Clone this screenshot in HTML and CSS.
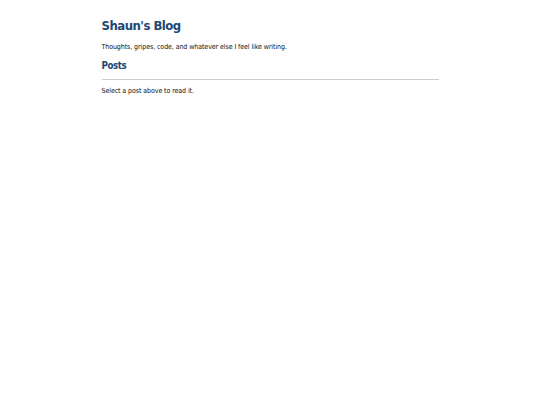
FILE: index.html
```html
<!DOCTYPE html>
<html>
<head>
<meta charset="utf-8">
<title>Shaun's Blog</title>
<link rel="stylesheet" href="styles.css">
</head>
<body>
<div class="page">
  <header class="site-header">
    <h1 class="site-title">Shaun's Blog</h1>
    <p class="tagline">Thoughts, gripes, code, and whatever else I feel like writing.</p>
  </header>
  <section class="posts">
    <h2 class="section-title">Posts</h2>
    <hr class="rule">
    <p class="empty">Select a post above to read it.</p>
  </section>
</div>
</body>
</html>
```
FILE: styles.css
```css
html, body {
  margin: 0;
  padding: 0;
  background: #ffffff;
}
body {
  font-family: "DejaVu Sans Condensed", "DejaVu Sans", sans-serif;
  color: #111111;
}
.page {
  width: 337px;
  margin: 0 auto;
  padding-top: 17px;
}
.site-title {
  margin: 0;
  font-size: 13px;
  line-height: 18px;
  font-weight: bold;
  letter-spacing: -0.5px;
  color: #1c4873;
}
.tagline {
  margin: 7px 0 0 0;
  font-size: 7px;
  line-height: 10px;
  letter-spacing: -0.08px;
}
.section-title {
  margin: 7px 0 0 0;
  font-size: 9.6px;
  line-height: 14px;
  font-weight: bold;
  letter-spacing: -0.4px;
  color: #1c4873;
}
.rule {
  margin: 6px 0 0 0;
  border: 0;
  height: 1px;
  background: #cccccc;
}
.empty {
  margin: 6px 0 0 0;
  font-size: 7px;
  line-height: 10px;
  letter-spacing: -0.08px;
}
```
